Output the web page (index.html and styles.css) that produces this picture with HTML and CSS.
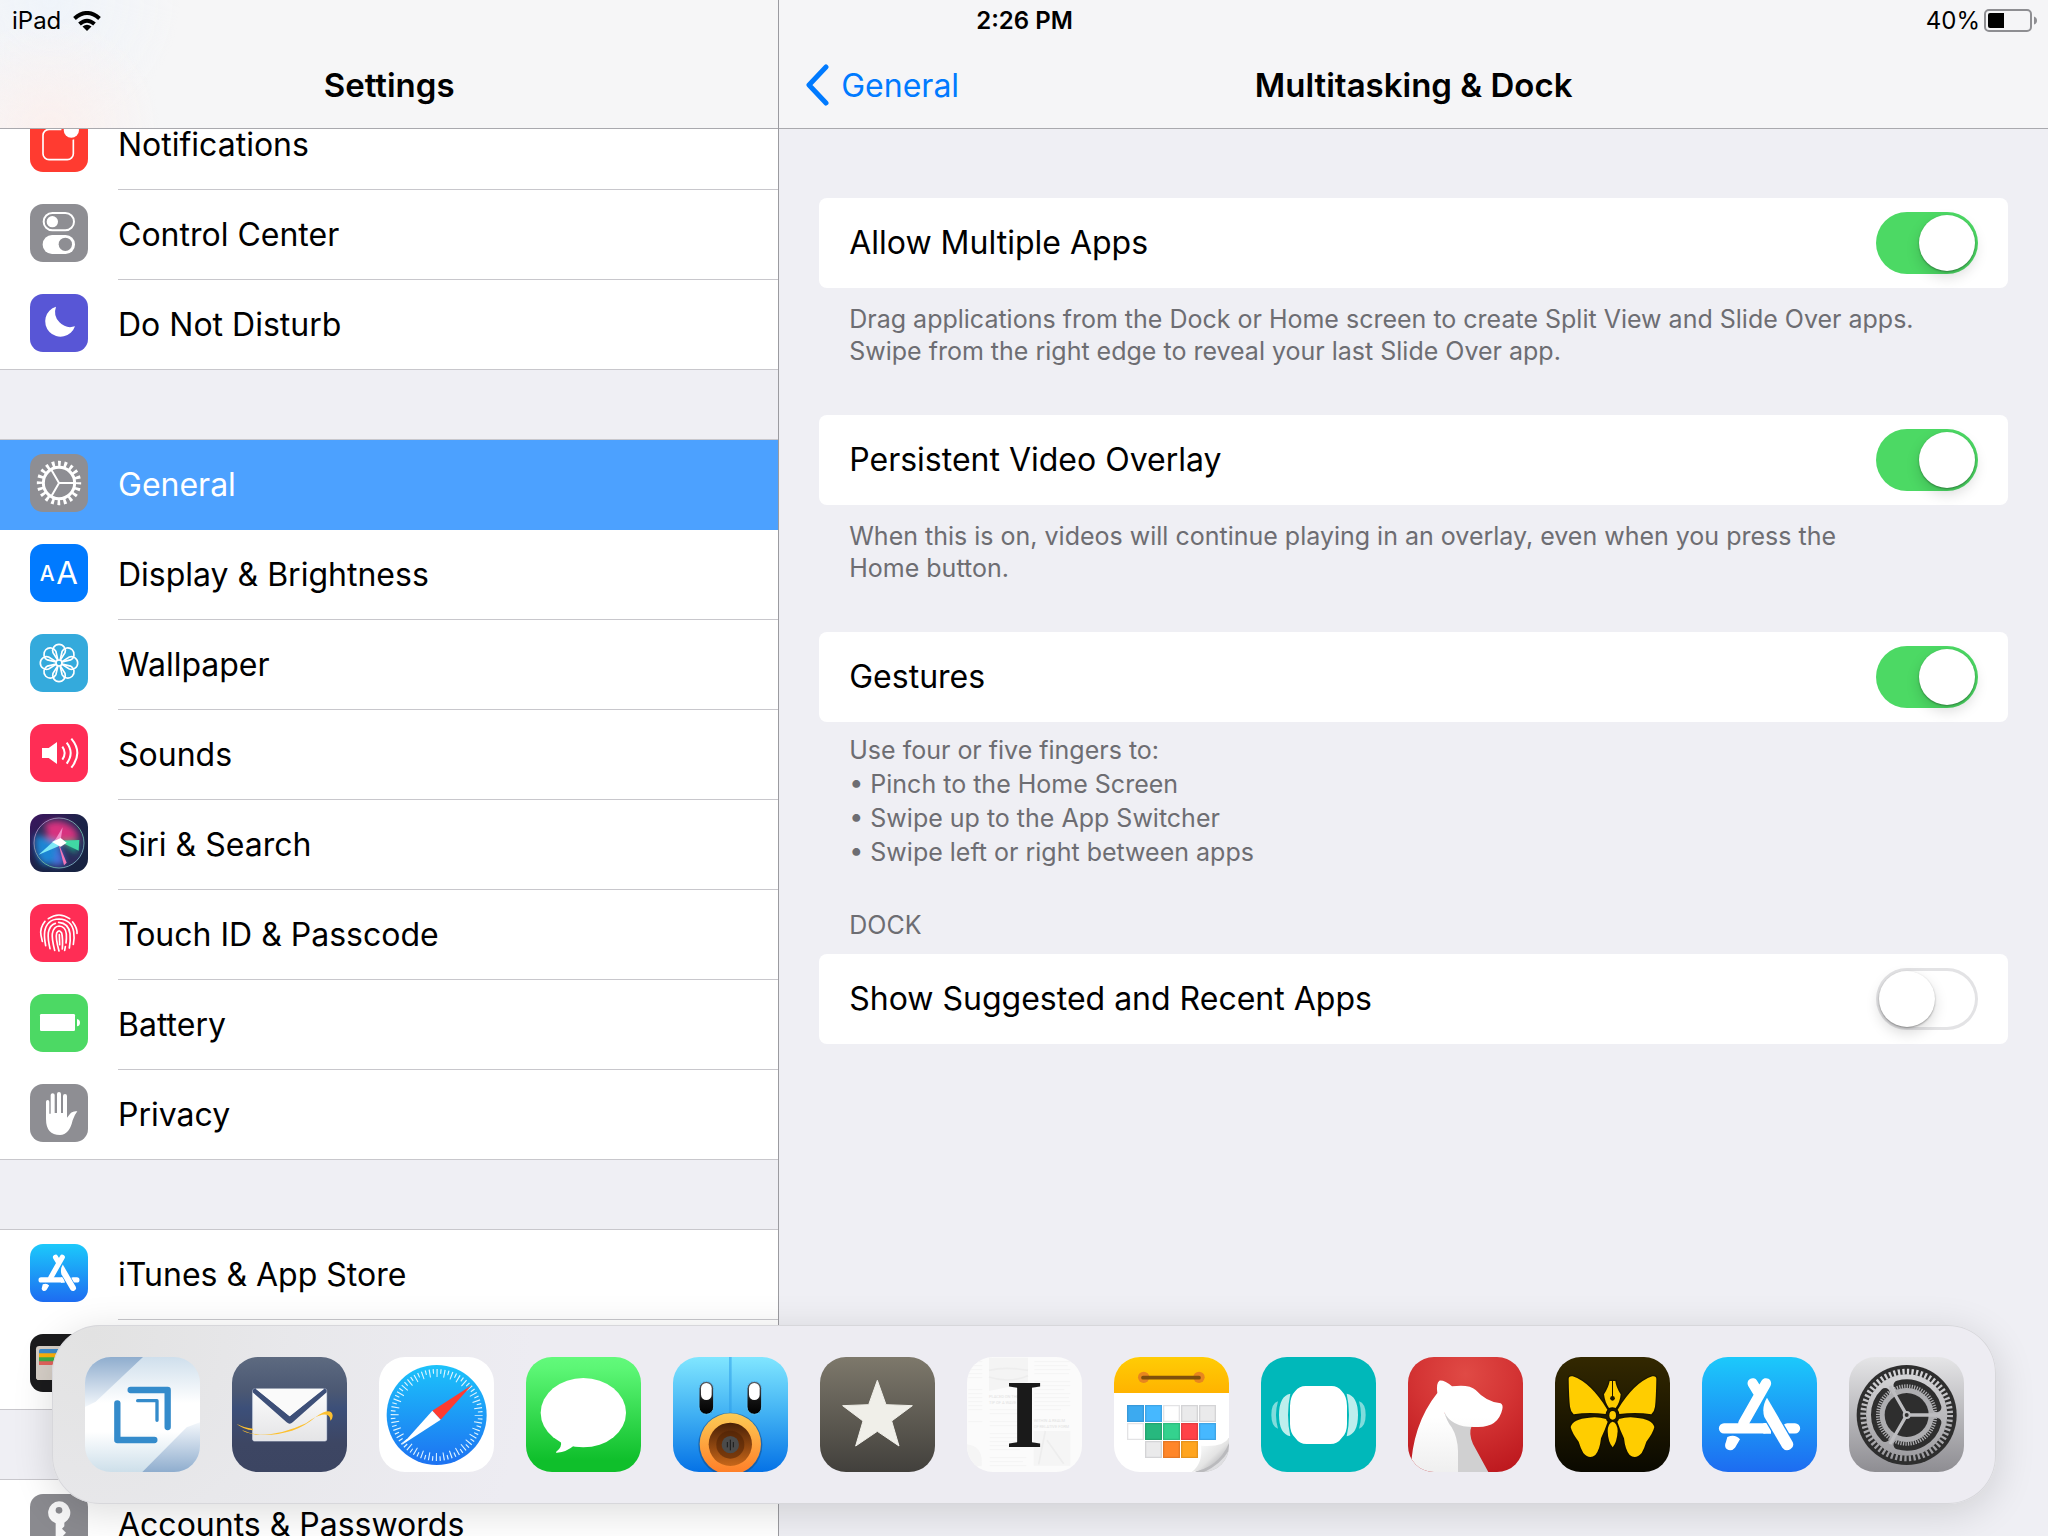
FILE: index.html
```html
<!DOCTYPE html>
<html lang="en">
<head>
<meta charset="utf-8">
<meta name="viewport" content="width=device-width, initial-scale=1">
<title>Settings</title>
<link rel="stylesheet" href="styles.css">
</head>
<body>
<svg class="defs" aria-hidden="true">
  <defs>
    <linearGradient id="store" gradientUnits="userSpaceOnUse" x1="0" y1="0" x2="0" y2="345"><stop offset="0" stop-color="#1cc9fb"/><stop offset="1" stop-color="#1d6cf1"/></linearGradient>
    <symbol id="appstore" viewBox="0 0 345 345">
      <rect width="345" height="345" fill="url(#store)"/>
      <g fill="none" stroke="#fff" stroke-width="31" stroke-linecap="round">
        <path d="M152 79l20 33M192 79l-68 120"/>
        <path d="M66 214h118M256 214h23"/>
      </g>
      <path d="M184 198h15q9 14 8 32h-23z" fill="#fff"/>
      <path d="M76 240q24-10 38 7l-15 25q-11 13-24 5-10-8-3-23z" fill="#fff"/>
      <path d="M195 122q-17 28-8 58l54 92q10 13 24 5 13-8 7-22z" fill="#fff" stroke="url(#store)" stroke-width="8" paint-order="stroke"/>
    </symbol>
  </defs>
</svg>

<div class="status">
  <div class="status-left"><span>iPad</span>
    <svg width="28" height="20" viewBox="0 0 28 20" aria-label="Wi-Fi"><g fill="none" stroke="#000" stroke-width="4"><path d="M1.500 7.500q12.500-11 25 0"/><path d="M6.500 13q7.500-6.500 15 0"/></g><path d="M9.500 15.500q4.500-3.500 9 0L14 20z"/></svg>
  </div>
  <time class="status-time">2:26 PM</time>
  <div class="status-right"><span>40%</span>
    <svg width="53" height="23" viewBox="0 0 53 23" aria-label="Battery 40%"><rect x="1" y="1" width="46" height="21" rx="4" fill="none" stroke="#8e8e92" stroke-width="2"/><path d="M6 4h14v15H6q-2 0-2-2V6q0-2 2-2z"/><path d="M50 7.500q3 1 3 4t-3 4z" fill="#8e8e92"/></svg>
  </div>
</div>

<div class="split">
  <aside class="sidebar">
    <header class="bar bar-side"><h1>Settings</h1></header>
    <nav class="menu">
      <ul class="menu-group">
        <li><a class="row" href="#notifications"><svg class="icon" viewBox="0 0 174 174"><rect width="174" height="174" fill="#ff3b30"/><rect x="39" y="46" width="91" height="91" rx="18" fill="none" stroke="#fff" stroke-width="5"/><circle cx="124" cy="48" r="30" fill="#ff3b30"/><circle cx="124" cy="48" r="23" fill="#fff"/></svg><span>Notifications</span></a></li>
        <li><a class="row" href="#control"><svg class="icon" viewBox="0 0 174 174"><rect width="174" height="174" fill="#8e8e93"/><rect x="41" y="27" width="91" height="52" rx="26" fill="none" stroke="#fff" stroke-width="6"/><circle cx="67" cy="53" r="17" fill="#fff"/><rect x="38" y="93" width="97" height="57" rx="28" fill="#fff"/><circle cx="106" cy="121" r="20" fill="#8e8e93"/></svg><span>Control Center</span></a></li>
        <li><a class="row" href="#dnd"><svg class="icon" viewBox="0 0 174 174"><rect width="174" height="174" fill="#5856d6"/><path d="M78 38A46 46 0 1 0 135 97A46 46 0 0 1 78 38z" fill="#fff"/></svg><span>Do Not Disturb</span></a></li>
      </ul>
      <ul class="menu-group">
        <li><a class="row selected" href="#general" aria-current="page"><svg class="icon" viewBox="0 0 174 174"><rect width="174" height="174" fill="#8e8e93"/><g fill="none" stroke="#fff"><circle cx="87" cy="87" r="58" stroke-width="17" pathLength="200" stroke-dasharray="4.500 5.500" stroke-dashoffset="2.250"/><circle cx="87" cy="87" r="47" stroke-width="9"/><path d="M87 87h45M87 87L64.500 48M87 87L64.500 126" stroke-width="6"/></g></svg><span>General</span></a></li>
        <li><a class="row" href="#display"><svg class="icon" viewBox="0 0 174 174"><rect width="174" height="174" fill="#007aff"/><text class="glyph" x="29" y="111" font-size="63">A</text><text class="glyph thin" x="79" y="119" font-size="94">A</text></svg><span>Display &amp; Brightness</span></a></li>
        <li><a class="row" href="#wallpaper"><svg class="icon" viewBox="0 0 174 174"><rect width="174" height="174" fill="#34aadc"/><g transform="translate(87 87)" fill="none" stroke="#fff" stroke-width="5">
          <circle r="9"/>
          <path id="petal" d="M-4-9L-18-31A19 19 0 1 1 18-31L4-9"/>
          <use href="#petal" transform="rotate(45)"/><use href="#petal" transform="rotate(90)"/><use href="#petal" transform="rotate(135)"/><use href="#petal" transform="rotate(180)"/><use href="#petal" transform="rotate(225)"/><use href="#petal" transform="rotate(270)"/><use href="#petal" transform="rotate(315)"/></g></svg><span>Wallpaper</span></a></li>
        <li><a class="row" href="#sounds"><svg class="icon" viewBox="0 0 174 174"><rect width="174" height="174" fill="#ff2d55"/><path d="M36 72h20l25-18v66l-25-18H36z" fill="#fff"/><path d="M97 68q14 19 0 39M110 56q24 31 0 63M124 44q36 43 0 87" fill="none" stroke="#fff" stroke-width="6"/></svg><span>Sounds</span></a></li>
        <li><a class="row" href="#siri"><svg class="icon" viewBox="0 0 174 174">
          <defs>
            <linearGradient id="siri-bg" x1="0" y1="0" x2="1" y2="1"><stop offset="0" stop-color="#3d1560"/><stop offset=".5" stop-color="#1b2348"/><stop offset="1" stop-color="#15223f"/></linearGradient>
            <linearGradient id="siri-ring" x1="0" y1="0" x2="1" y2="1"><stop offset="0" stop-color="#b06fc0"/><stop offset=".6" stop-color="#5fae9a"/><stop offset="1" stop-color="#7c93c4"/></linearGradient>
            <filter id="soft" x="-30%" y="-30%" width="160%" height="160%"><feGaussianBlur stdDeviation="9"/></filter>
            <filter id="glow" x="-30%" y="-30%" width="160%" height="160%"><feGaussianBlur stdDeviation="2"/></filter>
          </defs>
          <rect width="174" height="174" fill="url(#siri-bg)"/>
          <circle cx="87" cy="87" r="74" fill="#2b2c5c"/>
          <g filter="url(#soft)"><path d="M44 30q46-24 90 14l14 30-90 16z" fill="#d8327f"/><path d="M16 62l69 20 0 65-45 5q-24-25-24-60z" fill="#1a85d4"/><path d="M85 85l20 62-35 12z" fill="#4a6fe0"/><path d="M90 80l55 5-8 34z" fill="#1fa783"/></g>
          <g filter="url(#glow)"><path d="M26 122l58-52 12 22z" fill="#7fe9f7"/><path d="M84 84l26 62-8 8z" fill="#f277b8"/><path d="M84 80l64-2-2 32z" fill="#3fd9a4"/><path d="M98 40l-8 50-16-10z" fill="#f58cc8"/><path d="M66 84l26-12 18 14-18 12z" fill="#fff"/></g>
          <circle cx="87" cy="87" r="75" fill="none" stroke="url(#siri-ring)" stroke-width="3"/></svg><span>Siri &amp; Search</span></a></li>
        <li><a class="row" href="#touchid"><svg class="icon" viewBox="0 0 174 174"><rect width="174" height="174" fill="#ff2d55"/><g fill="none" stroke="#fff" stroke-width="5" stroke-linecap="round">
          <path d="M55 44q32-22 64 0M45 52q-16 20-12 42l4 18M128 54q14 18 13 34"/>
          <path d="M47 125q-5-26-3-42Q50 46 87 45q38 2 44 38 3 18-1 38"/>
          <path d="M60 134q-7-30-5-48 5-24 21-28M86 55q30 2 34 34 2 20-2 43"/>
          <path d="M74 139q-9-36-7-50 4-22 20-23 20 1 22 24 1 14-1 27M106 128l-2 11"/>
          <path d="M87 141q-11-40-7-54 7-13 15 0 4 16 2 48"/><path d="M88 92l1 30"/></g></svg><span>Touch ID &amp; Passcode</span></a></li>
        <li><a class="row" href="#battery"><svg class="icon" viewBox="0 0 174 174"><rect width="174" height="174" fill="#4cd964"/><rect x="30" y="60" width="105" height="51" rx="4" fill="#fff"/><path d="M141 75q9 2 9 11t-9 11z" fill="#fff"/></svg><span>Battery</span></a></li>
        <li><a class="row" href="#privacy"><svg class="icon" viewBox="0 0 174 174"><rect width="174" height="174" fill="#8e8e93"/><path d="M48 53q0-5 5-5t5 5v36h4V33q0-5 6-5t6 5v54h7V30q0-6 6-6t6 6v57h6V36q0-6 6-6t6 6v65q6-8 12-15 8-6 19-4-8 10-14 27-10 44-38 44-42 0-42-48z" fill="#fff"/></svg><span>Privacy</span></a></li>
      </ul>
      <ul class="menu-group">
        <li><a class="row" href="#store-settings"><svg class="icon"><use href="#appstore"/></svg><span>iTunes &amp; App Store</span></a></li>
        <li><a class="row" href="#wallet"><svg class="icon" viewBox="0 0 174 174"><rect width="174" height="174" fill="#1b1b1d"/><rect x="18" y="36" width="138" height="102" rx="10" fill="#d6cfc7"/><rect x="27" y="45" width="120" height="48" rx="5" fill="#3f8ccb"/><path d="M27 58h120v35H27z" fill="#fdb00b"/><path d="M27 70h120v23H27z" fill="#3fae49"/><path d="M27 82h120v11H27z" fill="#e2625c"/><path d="M18 93h45q24 20 48 0h45v35q0 10-10 10H28q-10 0-10-10z" fill="#d6cfc7"/></svg></a></li>
      </ul>
      <ul class="menu-group">
        <li><a class="row" href="#accounts"><svg class="icon" viewBox="0 0 174 174"><rect width="174" height="174" fill="#8a8a8f"/><path d="M87 22a34 34 0 0 1 16 64v11l-7 7 12 12-10 11 8 10-19 24-10-10V88a34 34 0 0 1 10-66z" fill="#f7f7f8"/><circle cx="87" cy="49" r="10" fill="#8a8a8f"/></svg><span>Accounts &amp; Passwords</span></a></li>
      </ul>
    </nav>
  </aside>

  <main class="detail">
    <header class="bar bar-detail">
      <a class="back" href="#general"><svg width="24" height="42" viewBox="0 0 24 42" aria-hidden="true"><path d="M21 3L4 21l17 18" fill="none" stroke="#007aff" stroke-width="5" stroke-linecap="round" stroke-linejoin="round"/></svg><span>General</span></a>
      <h2>Multitasking &amp; Dock</h2>
    </header>
    <div class="panel">
      <section class="setting">
        <label class="card"><span>Allow Multiple Apps</span><input class="switch" type="checkbox" role="switch" checked></label>
        <p class="note">Drag applications from the Dock or Home screen to create Split View and Slide Over apps.<br>Swipe from the right edge to reveal your last Slide Over app.</p>
      </section>
      <section class="setting">
        <label class="card"><span>Persistent Video Overlay</span><input class="switch" type="checkbox" role="switch" checked></label>
        <p class="note">When this is on, videos will continue playing in an overlay, even when you press the<br>Home button.</p>
      </section>
      <section class="setting">
        <label class="card"><span>Gestures</span><input class="switch" type="checkbox" role="switch" checked></label>
        <div class="note gestures"><p>Use four or five fingers to:</p>
          <ul><li>• Pinch to the Home Screen</li><li>• Swipe up to the App Switcher</li><li>• Swipe left or right between apps</li></ul></div>
      </section>
      <section class="setting">
        <h3 class="caption">DOCK</h3>
        <label class="card"><span>Show Suggested and Recent Apps</span><input class="switch" type="checkbox" role="switch"></label>
      </section>
    </div>
  </main>
</div>

<nav class="dock" aria-label="Dock">
  <button class="app" type="button" aria-label="Drafts"><svg viewBox="0 0 345 345">
    <defs><linearGradient id="dr" x1="0" y1="0" x2="0" y2="1"><stop offset="0" stop-color="#cfdfec"/><stop offset=".4" stop-color="#fff"/><stop offset=".65" stop-color="#fff"/><stop offset="1" stop-color="#cddfea"/></linearGradient>
    <linearGradient id="dr1" x1="0" y1="0" x2="0" y2="1"><stop offset="0" stop-color="#8fadce"/><stop offset="1" stop-color="#f3f7fb"/></linearGradient>
    <linearGradient id="dr2" x1="0" y1="0" x2="0" y2="1"><stop offset="0" stop-color="#f3f7fb"/><stop offset="1" stop-color="#8fadce"/></linearGradient></defs>
    <rect width="345" height="345" fill="url(#dr)"/><path d="M0 0h174L32 134 0 150z" fill="url(#dr1)"/><path d="M345 345H172l133-134 40-15z" fill="url(#dr2)"/>
    <g fill="none" stroke="#348bcb" stroke-linecap="round" stroke-linejoin="round"><path d="M137 99h111v111M97 139v110h111" stroke-width="19"/><path d="M158 131h58v59" stroke-width="10"/></g></svg></button>
  <button class="app" type="button" aria-label="Mail"><svg viewBox="0 0 345 345">
    <defs><linearGradient id="ml" x1="0" y1="0" x2="0" y2="1"><stop offset="0" stop-color="#5d6a80"/><stop offset=".3" stop-color="#4b5873"/><stop offset=".45" stop-color="#3c4f79"/><stop offset=".75" stop-color="#3d4663"/><stop offset="1" stop-color="#3c4562"/></linearGradient>
    <linearGradient id="env" x1="0" y1="0" x2="0" y2="1"><stop offset="0" stop-color="#fdfdfd"/><stop offset="1" stop-color="#e4e4e6"/></linearGradient></defs>
    <rect width="345" height="345" fill="url(#ml)"/><rect x="62" y="96" width="222" height="156" rx="5" fill="url(#env)" stroke="#dfe6f2" stroke-width="2"/>
    <path d="M62 98l8-4 103 84L276 94l8 4v8L182 196q-9 8-18 0L62 106z" fill="#3d4f78"/><path d="M71 95h206L173 178z" fill="#fafafa"/>
    <path d="M30 219q60 28 150 2 40-14 72-42 45-30 50-4 0 12-7 16 1-22-25-18-22 5-48 26-80 38-150 34-36-6-42-14z" fill="#fdc02f"/><path d="M13 200q22 18 50 20v-5q-28-3-50-15z" fill="#fdc02f"/></svg></button>
  <button class="app" type="button" aria-label="Safari"><svg viewBox="0 0 345 345">
    <rect width="345" height="345" fill="#fff"/><circle cx="173" cy="174" r="150" fill="url(#store)"/>
    <g fill="none" stroke="#dff4ff"><circle cx="173" cy="174" r="126" stroke-width="24" pathLength="720" stroke-dasharray="3 17" stroke-dashoffset="1"/><circle cx="173" cy="174" r="131" stroke-width="14" pathLength="720" stroke-dasharray="3 17" stroke-dashoffset="-9"/></g>
    <path d="M278 85L160 161l25 27z" fill="#ff3b30"/><path d="M68 264l92-103 25 27z" fill="#fff"/></svg></button>
  <button class="app" type="button" aria-label="Messages"><svg viewBox="0 0 345 345">
    <defs><linearGradient id="ms" x1="0" y1="0" x2="0" y2="1"><stop offset="0" stop-color="#62f97b"/><stop offset=".1" stop-color="#5cf675"/><stop offset=".9" stop-color="#0fbf2b"/><stop offset="1" stop-color="#0fbf2b"/></linearGradient></defs>
    <rect width="345" height="345" fill="url(#ms)"/><ellipse cx="172" cy="167" rx="128" ry="104" fill="#fff"/><path d="M104 252q6 18-14 33-1 3 3 2 30-3 50-21z" fill="#fff"/></svg></button>
  <button class="app" type="button" aria-label="Tweetbot"><svg viewBox="0 0 345 345">
    <defs><linearGradient id="tb" x1="0" y1="0" x2="0" y2="1"><stop offset="0" stop-color="#80e6ff"/><stop offset=".5" stop-color="#40b0f3"/><stop offset="1" stop-color="#0572e6"/></linearGradient>
    <linearGradient id="eye" x1="0" y1="0" x2="0" y2="1"><stop offset="0" stop-color="#5d6065"/><stop offset=".6" stop-color="#111"/><stop offset="1" stop-color="#000"/></linearGradient>
    <linearGradient id="lip" x1="0" y1="0" x2="0" y2="1"><stop offset="0" stop-color="#fccb55"/><stop offset="1" stop-color="#ff7c27"/></linearGradient>
    <linearGradient id="mouth" x1="0" y1="0" x2="0" y2="1"><stop offset="0" stop-color="#492006"/><stop offset="1" stop-color="#c76619"/></linearGradient></defs>
    <rect width="345" height="345" fill="url(#tb)"/><path d="M168 0h8v170h-8z" fill="#2d9de8" opacity=".55"/>
    <g stroke="#59c2fa" stroke-width="3"><rect x="78" y="73" width="44" height="99" rx="22" fill="url(#eye)"/><rect x="222" y="73" width="44" height="99" rx="22" fill="url(#eye)"/></g><rect x="84" y="78" width="32" height="51" rx="16" fill="#fff"/><rect x="228" y="78" width="32" height="51" rx="16" fill="#fff"/>
    <circle cx="172" cy="263" r="96" fill="#164f8b" opacity=".6"/><circle cx="172" cy="261" r="92" fill="url(#lip)"/><circle cx="172" cy="262" r="65" fill="url(#mouth)"/><circle cx="172" cy="263" r="42" fill="#4c2105" opacity=".55"/><circle cx="172" cy="263" r="26" fill="#4b4b4b"/><path d="M163 255v16M172 248v32M181 255v16" stroke="#1b1b1b" stroke-width="3"/></svg></button>
  <button class="app" type="button" aria-label="Reeder"><svg viewBox="0 0 345 345">
    <defs><linearGradient id="rd" x1="0" y1="0" x2="0" y2="1"><stop offset="0" stop-color="#7d786b"/><stop offset="1" stop-color="#42403c"/></linearGradient></defs>
    <rect width="345" height="345" fill="url(#rd)"/><path d="M172 70l26 73 79 3-62 46 22 75-65-44-65 44 22-75-61-46 78-3z" fill="#f0efe9" stroke="#f0efe9" stroke-width="3" stroke-linejoin="round"/></svg></button>
  <button class="app" type="button" aria-label="Instapaper"><svg viewBox="0 0 345 345">
    <rect width="345" height="345" fill="#fbfbfb"/><path d="M66 2h117v72l-40 12-77 16z" fill="#f4f4f4"/><path d="M200 222h110v104H200zM0 262q50 6 44 66H0z" fill="#f5f5f5"/><path d="M66 40q50-12 117 0M66 60q60 20 117-4M235 222l-20 100M240 250l50 70" stroke="#ededed" stroke-width="5" fill="none"/>
    <path d="M4 14h42M4 26h42M4 38h42M4 50h42M4 62h42M4 98h42M4 110h42M4 122h42M4 134h42M4 146h42M4 158h42M4 194h42M202 14h108M202 26h100M202 38h108M202 50h104M202 74h108M202 86h108M202 98h90M202 110h108M202 122h104M202 134h108M202 146h108M202 158h80M68 158h110M68 170h110M68 194h100M68 206h110M68 230h110M68 242h104M68 254h110M68 266h110M68 278h90M68 302h110M68 314h100M68 326h110" stroke="#f5f5f5" stroke-width="4"/>
    <g class="clipping"><text x="66" y="124">PLACED ON THE</text><text x="66" y="140">TIP OF A WAVE</text><text x="200" y="196">WITHIN A REALM</text><text x="200" y="212">OF RELATIVE FORM</text></g>
    <text class="initial" x="173" y="270" text-anchor="middle">I</text></svg></button>
  <button class="app" type="button" aria-label="Calendar"><svg viewBox="0 0 345 345">
    <defs><linearGradient id="cal" x1="0" y1="0" x2="0" y2="1"><stop offset="0" stop-color="#ffcc05"/><stop offset="1" stop-color="#ffb300"/></linearGradient><linearGradient id="curl" x1="0" y1="0" x2="1" y2="1"><stop offset=".2" stop-color="#fafbfb"/><stop offset=".55" stop-color="#e4e4e4"/><stop offset=".7" stop-color="#c4c4c6"/></linearGradient></defs>
    <rect width="345" height="345" fill="#fff"/><path d="M0 0h345v108H0z" fill="url(#cal)"/><circle cx="89" cy="61" r="17" fill="#e8861f"/><circle cx="255" cy="61" r="17" fill="#e8861f"/><path d="M87 62h168" stroke="#80500b" stroke-width="11" stroke-linecap="round"/>
    <g stroke-width="4"><g fill="#3caaf0" stroke="#3799da"><path d="M41 146h47v47H41z"/></g><g fill="#46b8ff" stroke="#3fa5e6"><path d="M95 146h47v47H95zM257 200h47v47h-47z"/></g><g fill="#fff" stroke="#e3e3e5"><path d="M149 146h47v47h-47zM41 200h47v47H41z"/></g><g fill="#eaeaeb" stroke="#d4d4d6"><path d="M203 146h47v47h-47zM257 146h47v47h-47zM95 254h47v47H95z"/></g><path d="M95 200h47v47H95z" fill="#27b87e" stroke="#23a570"/><path d="M149 200h47v47h-47z" fill="#34d28e" stroke="#2ebc7f"/><path d="M203 200h47v47h-47z" fill="#ff4248" stroke="#e53b40"/><path d="M149 254h47v47h-47z" fill="#ff8629" stroke="#e57825"/><path d="M203 254h47v47h-47z" fill="#ffa41e" stroke="#e5931b"/></g>
    <path d="M345 242q-24 70-103 103h103z" fill="#bababd"/><path d="M345 242q-18 30-84 24 6 54-28 79 78-10 112-86z" fill="url(#curl)"/><path d="M345 280v65h-74q50-24 74-65z" fill="#dedee1"/></svg></button>
  <button class="app" type="button" aria-label="Carousel"><svg viewBox="0 0 345 345">
    <rect width="345" height="345" fill="#00b8ba"/><g fill="#80dcdc"><path id="far" d="M51 133q-20 6-20 41t20 41q-12-41 0-82z"/><use href="#far" transform="matrix(-1 0 0 1 345 0)"/></g><g fill="#bdeeed"><path id="near" d="M88 110q-34 7-34 64t34 64q-14-64 0-128z"/><use href="#near" transform="matrix(-1 0 0 1 345 0)"/></g><path d="M134 87h78q18 0 30 15 16 16 16 45v54q0 28-16 42-12 18-34 18h-71q-22 0-34-18-16-14-16-42v-54q0-29 16-45 12-15 31-15z" fill="#fff"/></svg></button>
  <button class="app" type="button" aria-label="Bear"><svg viewBox="0 0 345 345">
    <defs><radialGradient id="br" cx=".5" cy=".15" r=".95"><stop offset="0" stop-color="#e04a45"/><stop offset=".45" stop-color="#d43434"/><stop offset="1" stop-color="#bb161c"/></radialGradient><linearGradient id="fur" x1="0" y1="0" x2="0" y2="1"><stop offset=".4" stop-color="#fff"/><stop offset="1" stop-color="#efefef"/></linearGradient></defs>
    <rect width="345" height="345" fill="url(#br)"/><path d="M109 165l82 42q-10 22 4 54l46 84H140z" fill="#d0d0d1"/><path d="M88 108q-4-30 6-37 16-2 38 17 52-7 71 11 32 36 75 40 8 5 5 18-12 54-74 53-78 4-100-45 7 28 22 46 18 30 19 72v62H8q4-142 80-237z" fill="url(#fur)"/></svg></button>
  <button class="app" type="button" aria-label="Ulysses"><svg viewBox="0 0 345 345">
    <defs><linearGradient id="ul" x1="0" y1="0" x2="0" y2="1"><stop offset="0" stop-color="#332800"/><stop offset="1" stop-color="#0a0900"/></linearGradient></defs>
    <rect width="345" height="345" fill="url(#ul)"/><g fill="#ffcd00" stroke="#0d0a00" stroke-opacity=".45" stroke-width="8" paint-order="stroke"><path id="wing" d="M41 66q0-10 12-8 54 18 104 100-5 7-5 13-50-7-96 1-9-8-11-23-3-24-4-83zM47 210q6-24 56-28 26-3 50 4 2 6 5 8-8 24-20 50-4 36-17 50-18 14-36-6-8-14-14-34-20-26-24-44z"/><use href="#wing" transform="matrix(-1 0 0 1 345 0)"/><path d="M164 72h17q2 18 16 40-2 24-15 41-10-4-20 0-12-16-15-41 14-22 17-40z"/><ellipse cx="173" cy="175" rx="10" ry="13"/><path d="M173 194q14 4 15 28-2 34-15 49-14-16-15-49 1-24 15-28z"/></g><path d="M172.500 72v50" stroke="#1c1600" stroke-width="3"/><circle cx="172.500" cy="124" r="7" fill="#1c1600"/></svg></button>
  <button class="app" type="button" aria-label="App Store"><svg><use href="#appstore"/></svg></button>
  <button class="app" type="button" aria-label="Settings"><svg viewBox="0 0 345 345">
    <defs><linearGradient id="st" x1="0" y1="0" x2="0" y2="1"><stop offset="0" stop-color="#e5e5e7"/><stop offset="1" stop-color="#8e8d92"/></linearGradient><linearGradient id="metal" gradientUnits="userSpaceOnUse" x1="0" y1="30" x2="0" y2="320"><stop offset="0" stop-color="#d9d9db"/><stop offset="1" stop-color="#99989c"/></linearGradient></defs>
    <rect width="345" height="345" fill="url(#st)"/><g transform="translate(173 174)"><circle r="150" fill="#2e2e2e"/></g>
    <g fill="none" stroke="url(#metal)"><circle cx="173" cy="174" r="130" stroke-width="18" pathLength="600" stroke-dasharray="5 5"/><circle cx="173" cy="174" r="61" stroke-width="122"/></g>
    <g transform="translate(173 174)" fill="none" stroke="#2e2e2e" stroke-width="28" stroke-linecap="round"><path id="slot" d="M90.200 22.500A93 93 0 0 1-25.600 89.400"/><use href="#slot" transform="rotate(120)"/><use href="#slot" transform="rotate(240)"/></g>
    <g fill="none" stroke="#aeaeb1"><circle cx="173" cy="174" r="86" stroke-width="12" pathLength="720" stroke-dasharray="5 5"/><circle cx="173" cy="174" r="73" stroke-width="16"/></g>
    <g transform="translate(173 174)"><circle r="66" fill="#2e2e2e"/><path d="M0 0h100M0 0l-50-87M0 0l-50 87" stroke="#bdbdc0" stroke-width="10"/><circle r="12" fill="#bdbdc0"/><circle r="6" fill="#2e2e2e"/></g></svg></button>
</nav>
</body>
</html>
```
FILE: styles.css
```css
* { box-sizing: border-box; }

body {
  margin: 0;
  height: 100vh;
  overflow: hidden;
  background: #efeff4;
  color: #000;
  font-family: Inter, "Liberation Sans", sans-serif;
  font-size: 32px;
}

h1, h2, h3, p, ul { margin: 0; padding: 0; font: inherit; }
ul { list-style: none; }
a { color: inherit; text-decoration: none; }
svg { display: block; flex: none; }
.defs { position: absolute; width: 0; height: 0; }

/* Status bar, lying over both navigation bars */
.status {
  position: absolute;
  inset: 0 0 auto;
  z-index: 3;
  display: grid;
  grid-template-columns: 1fr auto 1fr;
  align-items: center;
  height: 41px;
  padding: 0 11px 0 12px;
  font-size: 24px;
}
.status-left, .status-right { display: flex; align-items: center; }
.status-left { gap: 12px; }
.status-right { justify-content: flex-end; gap: 4px; }
.status-time { font-weight: 600; }

.split {
  display: grid;
  grid-template-columns: 38fr 62fr;
  height: 100%;
}

/* Navigation bars */
.bar {
  position: relative;
  z-index: 1;
  height: 129px;
  padding-top: 40px;
  border-bottom: 1px solid #a9a9ae;
  background: #f5f5f7;
}
.bar h1, .bar h2 {
  font-size: 33px;
  font-weight: 600;
  line-height: 90px;
  text-align: center;
}
.bar-side {
  background:
    radial-gradient(circle at 50px 128px, #fbf0ee, transparent 110px),
    radial-gradient(circle at 50px 0, #eff4fa, transparent 130px),
    #f6f6f7;
}
.bar-detail {
  display: grid;
  grid-template-columns: 1fr auto 1fr;
  align-items: center;
  padding-left: 26px;
  padding-right: 26px;
}
.back {
  display: flex;
  align-items: center;
  gap: 12px;
  color: #007aff;
}

/* Sidebar */
.sidebar { overflow: hidden; }
.menu { margin-top: -29px; }
.menu-group {
  margin-bottom: 69px;
  border-top: 1px solid #c8c7cc;
  border-bottom: 1px solid #c8c7cc;
  background: #fff;
}
.menu-group:first-child { border-top: 0; }
.menu-group li:last-child .row { height: 89px; }
.row {
  display: flex;
  gap: 30px;
  height: 90px;
  padding: 14px 0 0 30px;
}
.row span {
  flex: 1;
  line-height: 61px;
}
.menu-group li:not(:last-child) .row:not(.selected) {
  background: linear-gradient(#c8c7cc, #c8c7cc) 118px 100% / 100% 1px no-repeat;
}
.row.selected { background: #4ca1ff; color: #fff; }
.icon { width: 58px; height: 58px; border-radius: 13px; }
.glyph { fill: #fff; font-family: Inter, sans-serif; font-weight: 500; }
.glyph.thin { font-weight: 400; }

/* Detail */
.detail { border-left: 1px solid #9b9ba0; }
.panel { padding: 69px 40px; }
.card {
  display: flex;
  align-items: center;
  justify-content: space-between;
  height: 90px;
  padding: 0 30px;
  border-radius: 8px;
  background: #fff;
}
.card span { padding-bottom: 2px; }
.note {
  padding: 15px 30px 48px;
  color: #6d6d72;
  font-size: 25px;
  line-height: 32px;
}
.gestures { padding: 11px 30px 40px; line-height: 34px; }
.caption {
  padding: 0 30px 13px;
  color: #6d6d72;
  font-size: 25px;
  line-height: 32px;
}

.switch {
  appearance: none;
  display: flex;
  width: 102px;
  height: 62px;
  margin: 0;
  padding: 3px;
  border-radius: 31px;
  background: #fff;
  box-shadow: inset 0 0 0 3px #e3e3e5;
}
.switch::before {
  content: "";
  width: 56px;
  height: 56px;
  border-radius: 50%;
  background: #fff;
  box-shadow: 0 1px 2px rgba(0, 0, 0, .35), 0 6px 14px rgba(0, 0, 0, .15);
}
.switch:checked { background: #4cd964; box-shadow: none; }
.switch:checked::before { margin-left: auto; }

/* Dock floating above the page */
.dock {
  position: absolute;
  inset: auto 52px 32px;
  z-index: 4;
  display: flex;
  justify-content: space-between;
  padding: 32px 32px 32px 33px;
  border-radius: 48px;
  background: radial-gradient(circle at 40px 10px, #e2e2e2, #e8e8eb 200px, #edecf2 440px);
  box-shadow: inset 0 0 0 1px #d7d7db, 0 8px 40px rgba(0, 0, 0, .14);
}
.app {
  width: 115px;
  height: 115px;
  padding: 0;
  border: 0;
  border-radius: 26px;
  overflow: hidden;
  background: none;
}
.app svg { width: 100%; height: 100%; }
.initial {
  fill: #1a1a1a;
  font-family: "Liberation Serif", serif;
  font-size: 290px;
  font-weight: 700;
}
.clipping {
  fill: #e2e2e2;
  font-family: Roboto, sans-serif;
  font-size: 12px;
}
```
